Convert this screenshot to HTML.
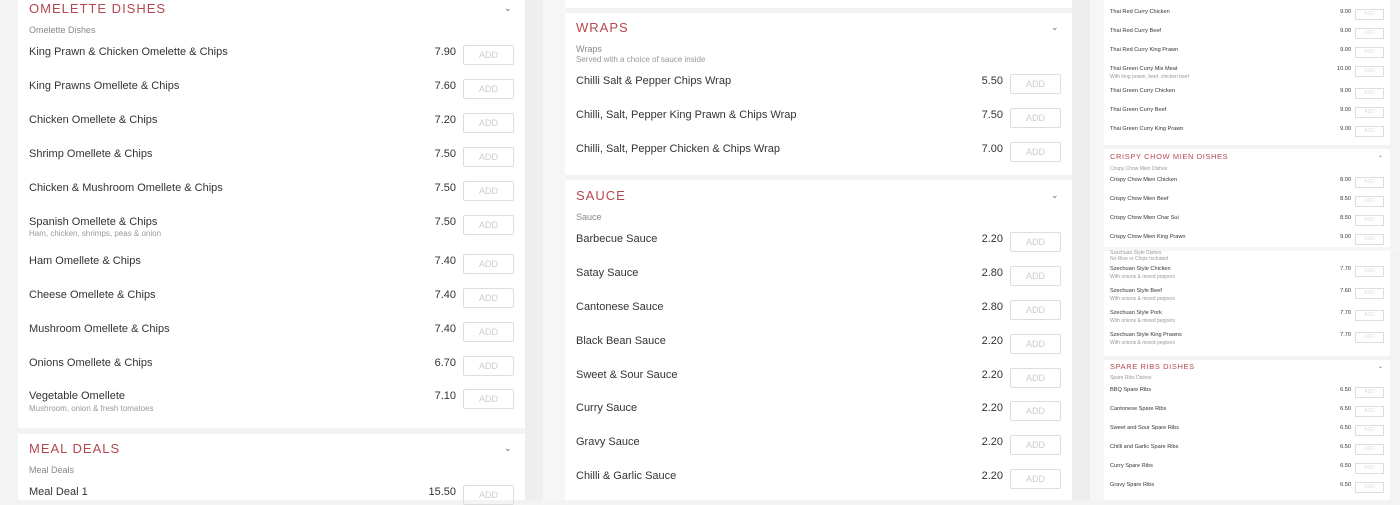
<!DOCTYPE html>
<html><head><meta charset="utf-8"><style>
*{margin:0;padding:0;box-sizing:border-box}
body{width:1400px;height:500px;overflow:hidden;background:#f3f3f3;position:relative;font-family:"Liberation Sans",sans-serif;color:#333}
.b{position:absolute}
.card{position:absolute;background:#fff}
.t{position:absolute;color:#b4474f;font-size:13px;letter-spacing:1px;white-space:nowrap}
.s{position:absolute;color:#888;font-size:9px;white-space:nowrap}
.n{position:absolute;font-size:11px;white-space:nowrap;color:#333}
.p{position:absolute;font-size:11px;text-align:right;width:40px;color:#333}
.a{position:absolute;border:1px solid #ddd;border-radius:2px;color:#ccc;font-size:9px;text-align:center;width:51px;height:20px;line-height:18px}
.c{position:absolute;font-size:9px;color:#666}
.t3{position:absolute;color:#b4474f;font-size:7.5px;letter-spacing:.6px;white-space:nowrap}
.s3{position:absolute;color:#999;font-size:5px;white-space:nowrap}
.n3{position:absolute;font-size:5.6px;white-space:nowrap;color:#333}
.p3{position:absolute;font-size:5.6px;text-align:right;width:30px;color:#333}
.a3{position:absolute;border:1px solid #ddd;width:29px;height:11px;color:#ddd;font-size:5px;text-align:center;line-height:9px}
</style></head><body>
<div class="b" style="left:525px;top:0;width:18px;height:500px;background:#eeeeee"></div>
<div class="b" style="left:543px;top:0;width:22px;height:500px;background:#f6f6f6"></div>
<div class="b" style="left:1072px;top:0;width:18px;height:500px;background:#eeeeee"></div>
<div class="b" style="left:1090px;top:0;width:14px;height:500px;background:#f6f6f6"></div>

<!-- column 1 -->
<div class="card" style="left:18px;top:0;width:507px;height:428px"></div>
<div class="card" style="left:18px;top:434px;width:507px;height:66px"></div>
<div class="t" style="left:29px;top:1px">OMELETTE DISHES</div>
<div class="c" style="left:504px;top:3px">&#8964;</div>
<div class="s" style="left:29px;top:25px">Omelette Dishes</div>

<div class="n" style="left:29px;top:46px">King Prawn &amp; Chicken Omelette &amp; Chips</div><div class="p" style="left:416px;top:46px">7.90</div><div class="a" style="left:463px;top:45px">ADD</div>
<div class="n" style="left:29px;top:80px">King Prawns Omellete &amp; Chips</div><div class="p" style="left:416px;top:80px">7.60</div><div class="a" style="left:463px;top:79px">ADD</div>
<div class="n" style="left:29px;top:114px">Chicken Omellete &amp; Chips</div><div class="p" style="left:416px;top:114px">7.20</div><div class="a" style="left:463px;top:113px">ADD</div>
<div class="n" style="left:29px;top:148px">Shrimp Omellete &amp; Chips</div><div class="p" style="left:416px;top:148px">7.50</div><div class="a" style="left:463px;top:147px">ADD</div>
<div class="n" style="left:29px;top:182px">Chicken &amp; Mushroom Omellete &amp; Chips</div><div class="p" style="left:416px;top:182px">7.50</div><div class="a" style="left:463px;top:181px">ADD</div>
<div class="n" style="left:29px;top:216px">Spanish Omellete &amp; Chips</div><div class="s" style="left:29px;top:229px;color:#999;font-size:8px">Ham, chicken, shrimps, peas &amp; onion</div><div class="p" style="left:416px;top:216px">7.50</div><div class="a" style="left:463px;top:215px">ADD</div>
<div class="n" style="left:29px;top:255px">Ham Omellete &amp; Chips</div><div class="p" style="left:416px;top:255px">7.40</div><div class="a" style="left:463px;top:254px">ADD</div>
<div class="n" style="left:29px;top:289px">Cheese Omellete &amp; Chips</div><div class="p" style="left:416px;top:289px">7.40</div><div class="a" style="left:463px;top:288px">ADD</div>
<div class="n" style="left:29px;top:323px">Mushroom Omellete &amp; Chips</div><div class="p" style="left:416px;top:323px">7.40</div><div class="a" style="left:463px;top:322px">ADD</div>
<div class="n" style="left:29px;top:357px">Onions Omellete &amp; Chips</div><div class="p" style="left:416px;top:357px">6.70</div><div class="a" style="left:463px;top:356px">ADD</div>
<div class="n" style="left:29px;top:390px">Vegetable Omellete</div><div class="s" style="left:29px;top:404px;color:#999;font-size:8px">Mushroom, onion &amp; fresh tomatoes</div><div class="p" style="left:416px;top:390px">7.10</div><div class="a" style="left:463px;top:389px">ADD</div>

<div class="t" style="left:29px;top:441px">MEAL DEALS</div>
<div class="c" style="left:504px;top:443px">&#8964;</div>
<div class="s" style="left:29px;top:465px">Meal Deals</div>
<div class="n" style="left:29px;top:486px">Meal Deal 1</div><div class="p" style="left:416px;top:486px">15.50</div><div class="a" style="left:463px;top:485px">ADD</div>

<!-- column 2 -->
<div class="card" style="left:565px;top:0;width:507px;height:8px"></div>
<div class="card" style="left:565px;top:13px;width:507px;height:162px"></div>
<div class="card" style="left:565px;top:180px;width:507px;height:320px"></div>
<div class="t" style="left:576px;top:20px">WRAPS</div>
<div class="c" style="left:1051px;top:22px">&#8964;</div>
<div class="s" style="left:576px;top:44px">Wraps</div>
<div class="s" style="left:576px;top:55px;color:#999;font-size:8px">Served with a choice of sauce inside</div>
<div class="n" style="left:576px;top:75px">Chilli Salt &amp; Pepper Chips Wrap</div><div class="p" style="left:963px;top:75px">5.50</div><div class="a" style="left:1010px;top:74px">ADD</div>
<div class="n" style="left:576px;top:109px">Chilli, Salt, Pepper King Prawn &amp; Chips Wrap</div><div class="p" style="left:963px;top:109px">7.50</div><div class="a" style="left:1010px;top:108px">ADD</div>
<div class="n" style="left:576px;top:143px">Chilli, Salt, Pepper Chicken &amp; Chips Wrap</div><div class="p" style="left:963px;top:143px">7.00</div><div class="a" style="left:1010px;top:142px">ADD</div>

<div class="t" style="left:576px;top:188px">SAUCE</div>
<div class="c" style="left:1051px;top:190px">&#8964;</div>
<div class="s" style="left:576px;top:212px">Sauce</div>
<div class="n" style="left:576px;top:233px">Barbecue Sauce</div><div class="p" style="left:963px;top:233px">2.20</div><div class="a" style="left:1010px;top:232px">ADD</div>
<div class="n" style="left:576px;top:267px">Satay Sauce</div><div class="p" style="left:963px;top:267px">2.80</div><div class="a" style="left:1010px;top:266px">ADD</div>
<div class="n" style="left:576px;top:301px">Cantonese Sauce</div><div class="p" style="left:963px;top:301px">2.80</div><div class="a" style="left:1010px;top:300px">ADD</div>
<div class="n" style="left:576px;top:335px">Black Bean Sauce</div><div class="p" style="left:963px;top:335px">2.20</div><div class="a" style="left:1010px;top:334px">ADD</div>
<div class="n" style="left:576px;top:369px">Sweet &amp; Sour Sauce</div><div class="p" style="left:963px;top:369px">2.20</div><div class="a" style="left:1010px;top:368px">ADD</div>
<div class="n" style="left:576px;top:402px">Curry Sauce</div><div class="p" style="left:963px;top:402px">2.20</div><div class="a" style="left:1010px;top:401px">ADD</div>
<div class="n" style="left:576px;top:436px">Gravy Sauce</div><div class="p" style="left:963px;top:436px">2.20</div><div class="a" style="left:1010px;top:435px">ADD</div>
<div class="n" style="left:576px;top:470px">Chilli &amp; Garlic Sauce</div><div class="p" style="left:963px;top:470px">2.20</div><div class="a" style="left:1010px;top:469px">ADD</div>

<!-- column 3 -->
<div class="card" style="left:1104px;top:0;width:286px;height:145px"></div>
<div class="card" style="left:1104px;top:149px;width:286px;height:98px"></div>
<div class="card" style="left:1094px;top:247px;width:306px;height:4px;background:#f6f6f6"></div>
<div class="card" style="left:1104px;top:251px;width:286px;height:105px"></div>
<div class="card" style="left:1104px;top:360px;width:286px;height:140px"></div>

<div class="n3" style="left:1110px;top:9px">Thai Red Curry Chicken</div><div class="p3" style="left:1321px;top:9px">9.00</div><div class="a3" style="left:1355px;top:9px">ADD</div>
<div class="n3" style="left:1110px;top:28px">Thai Red Curry Beef</div><div class="p3" style="left:1321px;top:28px">9.00</div><div class="a3" style="left:1355px;top:28px">ADD</div>
<div class="n3" style="left:1110px;top:47px">Thai Red Curry King Prawn</div><div class="p3" style="left:1321px;top:47px">9.00</div><div class="a3" style="left:1355px;top:47px">ADD</div>
<div class="n3" style="left:1110px;top:66px">Thai Green Curry Mix Meat</div><div class="s3" style="left:1110px;top:74px">With king prawn, beef, chicken beef</div><div class="p3" style="left:1321px;top:66px">10.00</div><div class="a3" style="left:1355px;top:66px">ADD</div>
<div class="n3" style="left:1110px;top:88px">Thai Green Curry Chicken</div><div class="p3" style="left:1321px;top:88px">9.00</div><div class="a3" style="left:1355px;top:88px">ADD</div>
<div class="n3" style="left:1110px;top:107px">Thai Green Curry Beef</div><div class="p3" style="left:1321px;top:107px">9.00</div><div class="a3" style="left:1355px;top:107px">ADD</div>
<div class="n3" style="left:1110px;top:126px">Thai Green Curry King Prawn</div><div class="p3" style="left:1321px;top:126px">9.00</div><div class="a3" style="left:1355px;top:126px">ADD</div>

<div class="t3" style="left:1110px;top:152px">CRISPY CHOW MIEN DISHES</div>
<div class="s3" style="left:1378px;top:152px;font-size:6px;color:#666">&#8964;</div>
<div class="s3" style="left:1110px;top:166px">Crispy Chow Mien Dishes</div>
<div class="n3" style="left:1110px;top:177px">Crispy Chow Mien Chicken</div><div class="p3" style="left:1321px;top:177px">8.00</div><div class="a3" style="left:1355px;top:177px">ADD</div>
<div class="n3" style="left:1110px;top:196px">Crispy Chow Mien Beef</div><div class="p3" style="left:1321px;top:196px">8.50</div><div class="a3" style="left:1355px;top:196px">ADD</div>
<div class="n3" style="left:1110px;top:215px">Crispy Chow Mien Char Sui</div><div class="p3" style="left:1321px;top:215px">8.50</div><div class="a3" style="left:1355px;top:215px">ADD</div>
<div class="n3" style="left:1110px;top:234px">Crispy Chow Mien King Prawn</div><div class="p3" style="left:1321px;top:234px">9.00</div><div class="a3" style="left:1355px;top:234px">ADD</div>

<div class="s3" style="left:1110px;top:250px">Szechuan Style Dishes</div>
<div class="s3" style="left:1110px;top:256px">No Rice or Chips Included</div>
<div class="n3" style="left:1110px;top:266px">Szechuan Style Chicken</div><div class="s3" style="left:1110px;top:274px">With onions &amp; mixed peppers</div><div class="p3" style="left:1321px;top:266px">7.70</div><div class="a3" style="left:1355px;top:266px">ADD</div>
<div class="n3" style="left:1110px;top:288px">Szechuan Style Beef</div><div class="s3" style="left:1110px;top:296px">With onions &amp; mixed peppers</div><div class="p3" style="left:1321px;top:288px">7.60</div><div class="a3" style="left:1355px;top:288px">ADD</div>
<div class="n3" style="left:1110px;top:310px">Szechuan Style Pork</div><div class="s3" style="left:1110px;top:318px">With onions &amp; mixed peppers</div><div class="p3" style="left:1321px;top:310px">7.70</div><div class="a3" style="left:1355px;top:310px">ADD</div>
<div class="n3" style="left:1110px;top:332px">Szechuan Style King Prawns</div><div class="s3" style="left:1110px;top:340px">With onions &amp; mixed peppers</div><div class="p3" style="left:1321px;top:332px">7.70</div><div class="a3" style="left:1355px;top:332px">ADD</div>

<div class="t3" style="left:1110px;top:362px">SPARE RIBS DISHES</div>
<div class="s3" style="left:1378px;top:363px;font-size:6px;color:#666">&#8964;</div>
<div class="s3" style="left:1110px;top:375px">Spare Ribs Dishes</div>
<div class="n3" style="left:1110px;top:387px">BBQ Spare Ribs</div><div class="p3" style="left:1321px;top:387px">6.50</div><div class="a3" style="left:1355px;top:387px">ADD</div>
<div class="n3" style="left:1110px;top:406px">Cantonese Spare Ribs</div><div class="p3" style="left:1321px;top:406px">6.50</div><div class="a3" style="left:1355px;top:406px">ADD</div>
<div class="n3" style="left:1110px;top:425px">Sweet and Sour Spare Ribs</div><div class="p3" style="left:1321px;top:425px">6.50</div><div class="a3" style="left:1355px;top:425px">ADD</div>
<div class="n3" style="left:1110px;top:444px">Chilli and Garlic Spare Ribs</div><div class="p3" style="left:1321px;top:444px">6.50</div><div class="a3" style="left:1355px;top:444px">ADD</div>
<div class="n3" style="left:1110px;top:463px">Curry Spare Ribs</div><div class="p3" style="left:1321px;top:463px">6.50</div><div class="a3" style="left:1355px;top:463px">ADD</div>
<div class="n3" style="left:1110px;top:482px">Gravy Spare Ribs</div><div class="p3" style="left:1321px;top:482px">6.50</div><div class="a3" style="left:1355px;top:482px">ADD</div>
</body></html>
